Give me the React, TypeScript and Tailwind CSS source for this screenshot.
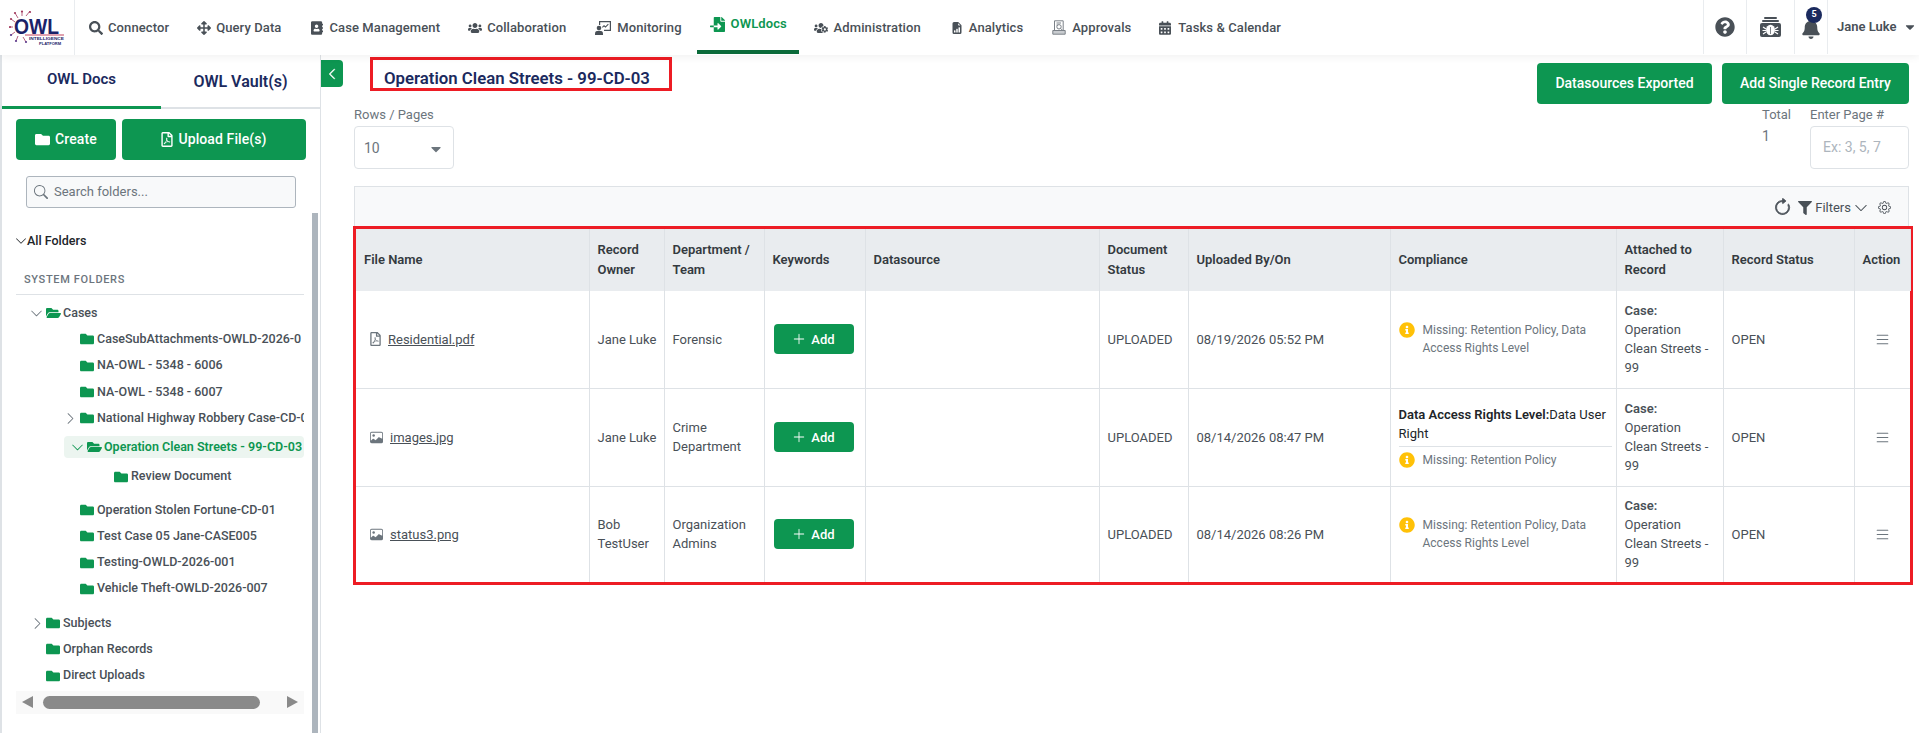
import { FaSearch, FaArrowsAlt, FaAddressBook, FaUsers, FaFileImport, FaUsersCog, FaCalendarAlt, FaQuestionCircle, FaBell, FaCaretDown, FaFolder, FaFolderOpen, FaRegFilePdf, FaFilter, FaInfoCircle } from "react-icons/fa";
import { BsChevronDown, BsChevronRight, BsChevronLeft, BsSearch, BsArrowClockwise, BsGear, BsPlusLg, BsList, BsFileEarmarkBarGraphFill, BsImage } from "react-icons/bs";
import type { ReactNode } from "react";

function MonitorIcon() {
  return (
    <svg viewBox="0 0 16 14" className="w-[16px] h-[14px]" fill="#495057">
      <path d="M4 0h12v10H9V8.8h5.8V1.2H5.2V4H4Z" />
      <path d="M7 6l2-2 1.5 1.3L13 2.8l.7.7-3.2 3.2L9 5.4 7.7 6.7Z" />
      <circle cx="4" cy="7" r="2.3" />
      <path d="M0 14v-1.6C0 10.5 1.4 9.8 4 9.8s4 .7 4 2.6V14Z" />
    </svg>
  );
}

function ApprovalIcon() {
  return (
    <svg viewBox="0 0 14 15" className="w-[14px] h-[15px]" fill="none" stroke="#7b8188" strokeWidth="1">
      <path d="M2.5 12.5V.8h8.7v11.7" />
      <path d="M4.5 3h4.5M4.5 5h1.5" />
      <circle cx="7" cy="6.8" r="2.2" />
      <path d="M8.6 8.4l2 2" />
      <path d="M.8 10.5h12.4v3.7H.8Z" fill="#c9ccd0" />
    </svg>
  );
}

const navItems = [
  { label: "Connector", icon: <FaSearch className="w-[14px] h-[14px]" />, ml: "ml-[14px]", gap: "gap-[5px]" },
  { label: "Query Data", icon: <FaArrowsAlt className="w-[14px] h-[14px]" />, ml: "ml-[28px]", gap: "gap-[5px]" },
  { label: "Case Management", icon: <FaAddressBook className="w-[12px] h-[14px]" />, ml: "ml-[30px]", gap: "gap-[6px]" },
  { label: "Collaboration", icon: <FaUsers className="w-[14px] h-[14px]" />, ml: "ml-[28px]", gap: "gap-[5px]" },
  { label: "Monitoring", icon: <MonitorIcon />, ml: "ml-[29px]", gap: "gap-[6px]" },
];
const navItemsRight = [
  { label: "Administration", icon: <FaUsersCog className="w-[14px] h-[14px]" />, ml: "ml-[15px]", gap: "gap-[6px]" },
  { label: "Analytics", icon: <BsFileEarmarkBarGraphFill className="w-[12px] h-[14px]" />, ml: "ml-[30px]", gap: "gap-[6px]" },
  { label: "Approvals", icon: <ApprovalIcon />, ml: "ml-[29px]", gap: "gap-[6px]" },
  { label: "Tasks & Calendar", icon: <FaCalendarAlt className="w-[12px] h-[14px]" />, ml: "ml-[28px]", gap: "gap-[7px]" },
];

function NavLink({ item }: { item: { label: string; icon: ReactNode; ml: string; gap: string } }) {
  return (
    <a className={`flex items-center ${item.ml} ${item.gap} text-[13px] tracking-[0.1px] font-medium text-[#495057] whitespace-nowrap`}>
      {item.icon}
      {item.label}
    </a>
  );
}

function Logo() {
  return (
    <svg viewBox="0 0 56 36" className="w-[56px] h-[36px]">
      <g stroke="#a23a5e" strokeWidth="0.8" fill="none">
        <path d="M9 8 L6 3 M13 6 L13 1 M17 6 L21 1 M6 12 L2 9 M4 17 L0.5 17 M6 22 L2 25 M9 26 L7 31 M14 27 L17 32" />
      </g>
      <g fill="#a23a5e">
        <circle cx="6" cy="3" r="1.1" />
        <circle cx="13" cy="1.5" r="1.1" />
        <circle cx="21" cy="2" r="1.1" />
        <circle cx="2" cy="9" r="1.1" />
        <circle cx="1" cy="17" r="1.1" />
      </g>
      <g fill="#5b3a8c">
        <circle cx="2" cy="25" r="1.1" />
        <circle cx="7" cy="31" r="1.1" />
        <circle cx="17" cy="32" r="1.1" />
      </g>
      <path d="M16 25 H55" stroke="#c2445f" strokeWidth="1" />
      <text x="5" y="23.5" fontFamily="Liberation Sans" fontWeight="700" fontSize="22" fill="#1b2268" textLength="45" lengthAdjust="spacingAndGlyphs">OWL</text>
      <text x="20" y="29.5" fontFamily="Liberation Sans" fontWeight="700" fontSize="4" fill="#1b2268" textLength="35" lengthAdjust="spacingAndGlyphs">INTELLIGENCE</text>
      <text x="30" y="34.5" fontFamily="Liberation Sans" fontWeight="700" fontSize="4" fill="#1b2268" textLength="22" lengthAdjust="spacingAndGlyphs">PLATFORM</text>
    </svg>
  );
}

function BugBox() {
  return (
    <svg viewBox="0 0 21 20" className="w-[21px] h-[20px]" fill="#495057">
      <rect x="4" y="0" width="13" height="2" rx="1" />
      <rect x="2" y="3" width="17" height="2" rx="1" />
      <rect x="0" y="6" width="21" height="14" rx="2" />
      <ellipse cx="10.5" cy="13" rx="4.5" ry="5.2" fill="#fff" />
      <path d="M10.5 10v7" stroke="#495057" strokeWidth="0.7" />
      <path d="M3 10l3 2M18 10l-3 2M2.5 13.5h3.5M18.5 13.5H15M3 17l3-2M18 17l-3-2" stroke="#fff" strokeWidth="1.2" />
    </svg>
  );
}

function Header() {
  return (
    <header className="h-[55px] shrink-0 bg-white flex items-stretch shadow-[0_2px_8px_rgba(0,0,0,0.06)] relative z-10">
      <div className="w-[75px] shrink-0 border-r border-[#e9ecef] flex items-center justify-center pr-[1px]">
        <Logo />
      </div>
      {navItems.map((item) => (
        <NavLink key={item.label} item={item} />
      ))}
      <a className="ml-[15px] w-[102px] mb-[1px] border-b-[4px] border-[#0b6b3a] flex items-center pb-[2px] pl-[13px] gap-[6px] text-[13px] tracking-[0.1px] font-semibold text-[#0d9651]">
        <FaFileImport className="w-[15px] h-[15px]" />
        OWLdocs
      </a>
      {navItemsRight.map((item) => (
        <NavLink key={item.label} item={item} />
      ))}
      <div className="ml-auto flex items-stretch mb-[1px] text-[#495057]">
        <div className="w-[43px] border-l border-[#e9ecef] flex items-center justify-center">
          <FaQuestionCircle className="w-[20px] h-[20px]" />
        </div>
        <div className="w-[48px] border-l border-[#e9ecef] flex items-center justify-center">
          <BugBox />
        </div>
        <div className="w-[33px] border-l border-[#e9ecef] flex items-center justify-center relative">
          <FaBell className="w-[18px] h-[20px] mt-[3px]" />
          <span className="absolute left-[11px] top-[7px] w-[16px] h-[16px] rounded-full bg-[#1b2a5e] text-white text-[9px] font-bold flex items-center justify-center">5</span>
        </div>
        <div className="w-[92px] border-l border-[#e9ecef] flex items-center pl-[9px] gap-[6px] text-[13px] font-semibold whitespace-nowrap">
          Jane Luke
          <FaCaretDown className="w-[14px] h-[14px]" />
        </div>
      </div>
    </header>
  );
}

function Tree({ children, className }: { children: ReactNode; className: string }) {
  return <div className={`flex items-center whitespace-nowrap text-[12.5px] font-medium text-[#495057] ${className}`}>{children}</div>;
}

const Folder = () => <FaFolder className="w-[14px] h-[14px] text-[#0d9651] shrink-0" />;
const FolderOpen = () => <FaFolderOpen className="w-[15px] h-[14px] text-[#0d9651] shrink-0" />;

function Sidebar() {
  const cases1 = ["CaseSubAttachments-OWLD-2026-0", "NA-OWL - 5348 - 6006", "NA-OWL - 5348 - 6007"];
  const cases2 = ["Operation Stolen Fortune-CD-01", "Test Case 05 Jane-CASE005", "Testing-OWLD-2026-001", "Vehicle Theft-OWLD-2026-007"];
  return (
    <aside className="w-[321px] shrink-0 border-l-2 border-r border-l-[#dee2e6] border-r-[#dee2e6] flex flex-col relative overflow-hidden">
      <div className="flex h-[54px] border-b-2 border-[#dee2e6] text-[15px] font-semibold text-[#1b2a5e] shrink-0">
        <div className="w-[159px] -mb-[2px] border-b-[3px] border-[#0d9651] flex items-center justify-center pb-[2px]">OWL Docs</div>
        <div className="w-[159px] flex items-center justify-center text-[16px] pt-[2px]">OWL Vault(s)</div>
      </div>
      <div className="flex gap-[6px] pl-[14px] pt-[10px] shrink-0">
        <button className="w-[100px] h-[41px] rounded-[4px] bg-[#0d9651] text-white text-[14px] tracking-[0.1px] font-medium flex items-center justify-center gap-[5px]">
          <FaFolder className="w-[15px] h-[15px]" /> Create
        </button>
        <button className="w-[184px] h-[41px] rounded-[4px] bg-[#0d9651] text-white text-[14px] tracking-[0.1px] font-medium flex items-center justify-center gap-[5px]">
          <FaRegFilePdf className="w-[12px] h-[15px]" /> Upload File(s)
        </button>
      </div>
      <div className="ml-[24px] mt-[16px] w-[270px] h-[32px] rounded-[3px] border border-[#adb5bd] bg-[#f8f9fa] flex items-center pl-[7px] gap-[6px] text-[13px] text-[#6c757d] shrink-0">
        <BsSearch className="w-[14px] h-[14px]" /> Search folders...
      </div>
      <div className="pl-[14px] w-[302px] overflow-hidden mt-[24px]">
        <div className="h-[18px] flex items-center text-[12.5px] font-medium text-[#212529]">
          <BsChevronDown className="w-[12px] h-[12px] -ml-[1px] shrink-0" />
          All Folders
        </div>
        <div className="mt-[20px] h-[25px] pl-[8px] pt-[2px] border-b border-[#dee2e6] text-[11px] font-medium tracking-[0.06em] text-[#6c757d]">SYSTEM FOLDERS</div>
        <Tree className="h-[26.3px] mt-[5px] pl-[14px]">
          <BsChevronDown className="w-[13px] h-[13px] mr-[3px] text-[#6c757d] shrink-0" />
          <FolderOpen />
          <span className="ml-[2px]">Cases</span>
        </Tree>
        {cases1.map((c) => (
          <Tree key={c} className="h-[26.3px] pl-[64px]">
            <Folder />
            <span className="ml-[3px]">{c}</span>
          </Tree>
        ))}
        <Tree className="h-[26.3px] pl-[48px]">
          <BsChevronRight className="w-[13px] h-[13px] mr-[3px] text-[#6c757d] shrink-0" />
          <Folder />
          <span className="ml-[3px]">National Highway Robbery Case-CD-01</span>
        </Tree>
        <Tree className="h-[22px] mt-[5px] ml-[48px] pl-[7px] rounded-[4px] bg-[#ecf5f0] font-semibold">
          <BsChevronDown className="w-[13px] h-[13px] mr-[3px] text-[#0d9651] shrink-0" />
          <FolderOpen />
          <span className="ml-[2px] text-[#0d9651]">Operation Clean Streets - 99-CD-03</span>
        </Tree>
        <Tree className="h-[26.3px] mt-[5px] pl-[98px]">
          <Folder />
          <span className="ml-[3px]">Review Document</span>
        </Tree>
        <div className="mt-[7px]">
          {cases2.map((c) => (
            <Tree key={c} className="h-[26.3px] pl-[64px]">
              <Folder />
              <span className="ml-[3px]">{c}</span>
            </Tree>
          ))}
        </div>
        <div className="mt-[8px]">
          <Tree className="h-[26.3px] pl-[15px]">
            <BsChevronRight className="w-[13px] h-[13px] mr-[2px] text-[#6c757d] shrink-0" />
            <Folder />
            <span className="ml-[3px]">Subjects</span>
          </Tree>
          <Tree className="h-[26.3px] pl-[30px]">
            <Folder />
            <span className="ml-[3px]">Orphan Records</span>
          </Tree>
          <Tree className="h-[26.3px] pl-[30px]">
            <Folder />
            <span className="ml-[3px]">Direct Uploads</span>
          </Tree>
        </div>
        <div className="h-[23px] mt-[2px] w-[288px] bg-[#f9f9f9] flex items-center">
          <span className="ml-[6px] w-0 h-0 border-y-[6px] border-y-transparent border-r-[11px] border-r-[#8a8a8a]" />
          <span className="ml-[10px] w-[217px] h-[13px] rounded-full bg-[#8a8a8a]" />
          <span className="ml-[27px] w-0 h-0 border-y-[6px] border-y-transparent border-l-[11px] border-l-[#8a8a8a]" />
        </div>
      </div>
      <div className="absolute right-[2px] top-[158px] bottom-0 w-[6px] bg-[#adb5bd]" />
    </aside>
  );
}

const complianceLong = "Missing: Retention Policy, Data Access Rights Level";

function Missing({ text }: { text: string }) {
  return (
    <div className="flex gap-[8px] text-[12px] leading-[18px] text-[#6c757d]">
      <FaInfoCircle className="w-[16px] h-[16px] text-[#ffc107] shrink-0 mt-[1px]" />
      <span>{text}</span>
    </div>
  );
}

const rows = [
  { file: "Residential.pdf", pdf: true, owner: "Jane Luke", dept: "Forensic", when: "08/19/2026 05:52 PM", h: "h-[97px]" },
  { file: "images.jpg", pdf: false, owner: "Jane Luke", dept: "Crime Department", when: "08/14/2026 08:47 PM", rights: true, h: "h-[98px]" },
  { file: "status3.png", pdf: false, owner: "Bob TestUser", dept: "Organization Admins", when: "08/14/2026 08:26 PM", h: "h-[96px]" },
];

function RecordsTable() {
  const th = "border-r border-[#dee2e6] pl-[8px] pr-[4px] text-left align-middle font-semibold text-[#343a40] leading-[20px]";
  const td = "border-r border-[#dee2e6] pl-[8px] pr-[4px] align-middle leading-[19px]";
  return (
    <table className="w-full table-fixed border-collapse text-[13px] text-[#495057]">
      <colgroup>
        <col className="w-[233px]" />
        <col className="w-[75px]" />
        <col className="w-[100px]" />
        <col className="w-[101px]" />
        <col className="w-[234px]" />
        <col className="w-[89px]" />
        <col className="w-[202px]" />
        <col className="w-[226px]" />
        <col className="w-[107px]" />
        <col className="w-[131px]" />
        <col className="w-[56px]" />
      </colgroup>
      <thead>
        <tr className="h-[62px] bg-[#e9ecef]">
          {["File Name", "Record Owner", "Department / Team", "Keywords", "Datasource", "Document Status", "Uploaded By/On", "Compliance", "Attached to Record", "Record Status", "Action"].map((h) => (
            <th key={h} className={th}>{h}</th>
          ))}
        </tr>
      </thead>
      <tbody>
        {rows.map((r) => (
          <tr key={r.file} className={`${r.h} border-b border-[#dee2e6] last:border-b-0`}>
            <td className={td}>
              <div className="flex items-center pl-[6px] gap-[7px]">
                {r.pdf ? <FaRegFilePdf className="w-[11px] h-[14px] text-[#6c757d]" /> : <BsImage className="w-[13px] h-[13px] text-[#6c757d]" />}
                <span className="underline">{r.file}</span>
              </div>
            </td>
            <td className={td}>{r.owner}</td>
            <td className={td}>{r.dept}</td>
            <td className={td}>
              <button className="w-[80px] h-[30px] ml-[1px] rounded-[4px] bg-[#0d9651] text-white text-[13px] font-medium flex items-center justify-center gap-[5px]">
                <BsPlusLg className="w-[14px] h-[14px]" /> Add
              </button>
            </td>
            <td className={td}></td>
            <td className={td}>UPLOADED</td>
            <td className={td}>{r.when}</td>
            <td className={td}>
              {r.rights ? (
                <>
                  <div className="text-[#212529] pb-[3px] border-b border-[#dee2e6] mb-[4px]">
                    <span className="font-semibold">Data Access Rights Level:</span>Data User Right
                  </div>
                  <Missing text="Missing: Retention Policy" />
                </>
              ) : (
                <Missing text={complianceLong} />
              )}
            </td>
            <td className="border-r border-[#dee2e6] pl-[8px] pr-[12px] align-middle leading-[19px]">
              <span className="font-semibold block">Case:</span>
              Operation Clean Streets - 99
            </td>
            <td className={td}>OPEN</td>
            <td className="align-middle">
              <BsList className="w-[17px] h-[17px] text-[#6c757d] mx-auto" />
            </td>
          </tr>
        ))}
      </tbody>
    </table>
  );
}

export default function App() {
  return (
    <div className="h-[733px] w-[1919px] overflow-hidden bg-white flex flex-col font-[Roboto,sans-serif]">
      <Header />
      <div className="flex flex-1 min-h-0">
        <Sidebar />
        <main className="flex-1 min-w-0 relative pl-[33px] pr-[10px]">
          <button className="absolute left-0 top-[5px] w-[22px] h-[27px] bg-[#0d9651] rounded-r-[4px] text-white flex items-center justify-center">
            <BsChevronLeft className="w-[12px] h-[12px] stroke-1" />
          </button>
          <div className="flex justify-between items-start">
            <div className="ml-[16px] mt-[2px] w-[302px] h-[34px] border-[3px] border-[#ed1c24] flex items-center pl-[11px] pt-[9px] text-[16.8px] font-semibold text-[#1b2a5e] whitespace-nowrap">
              Operation Clean Streets - 99-CD-03
            </div>
            <div className="flex gap-[10px] mt-[8px]">
              <button className="w-[175px] h-[41px] rounded-[4px] bg-[#0d9651] text-white text-[14px] font-medium">Datasources Exported</button>
              <button className="w-[187px] h-[41px] rounded-[4px] bg-[#0d9651] text-white text-[14px] font-medium">Add Single Record Entry</button>
            </div>
          </div>
          <div className="flex justify-between items-start">
            <div className="w-[100px]">
              <div className="h-[21px] mb-[1px] flex items-center text-[13px] text-[#6c757d]">Rows / Pages</div>
              <div className="h-[43px] border border-[#dee2e6] rounded-[4px] flex items-center justify-between pl-[9px] pr-[9px] pt-[2px] text-[14px] text-[#6c757d]">
                10
                <FaCaretDown className="w-[16px] h-[16px]" />
              </div>
            </div>
            <div className="flex">
              <div className="w-[48px]">
                <div className="h-[21px] mb-[1px] flex items-center text-[13px] text-[#6c757d]">Total</div>
                <div className="text-[14px] text-[#6c757d] mt-[1px]">1</div>
              </div>
              <div className="w-[99px]">
                <div className="h-[21px] mb-[1px] flex items-center text-[13px] text-[#6c757d]">Enter Page #</div>
                <div className="h-[43px] border border-[#dee2e6] rounded-[4px] flex items-center pl-[12px] text-[14px] text-[#adb5bd]">Ex: 3, 5, 7</div>
              </div>
            </div>
          </div>
          <div className="mt-[17px] h-[40px] border-t border-x border-[#dee2e6] bg-[#f8f9fa] flex items-center justify-end pr-[17px] pt-[2px] text-[#495057] text-[13px]">
            <BsArrowClockwise className="w-[19px] h-[19px] stroke-[0.6]" />
            <FaFilter className="w-[14px] h-[14px] ml-[6px]" />
            <span className="ml-[3px]">Filters</span>
            <BsChevronDown className="w-[14px] h-[14px] ml-[3px]" />
            <BsGear className="w-[13px] h-[13px] ml-[10px]" />
          </div>
          <div className="-ml-[1px] -mr-[4px] border-[3px] border-[#ed1c24] bg-white pr-[1px]">
            <RecordsTable />
          </div>
        </main>
      </div>
    </div>
  );
}
